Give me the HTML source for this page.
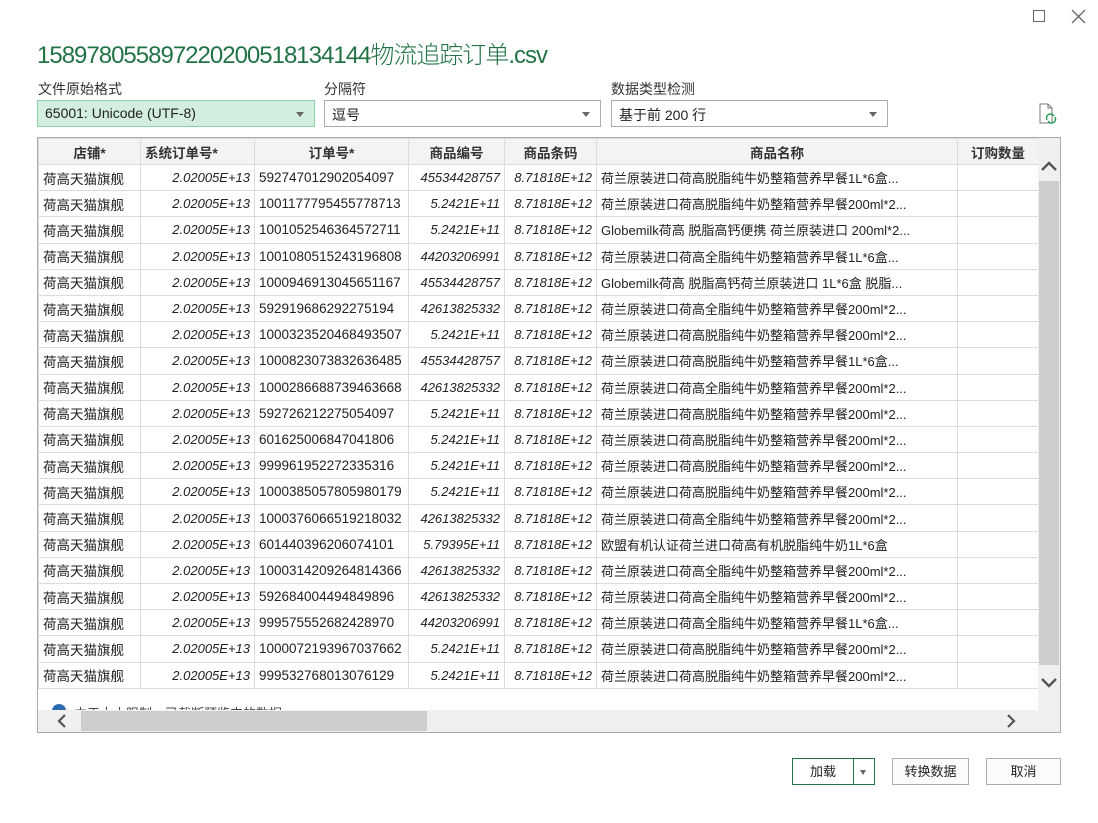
<!DOCTYPE html>
<html><head><meta charset="utf-8"><style>
*{box-sizing:border-box;margin:0;padding:0}
body{width:1098px;height:823px;background:#fff;position:relative;overflow:hidden;font-family:"Liberation Sans","Noto Sans CJK SC",sans-serif;color:#222}
.abs{position:absolute}
.title{left:37px;top:35px;font-size:24px;color:#217346;letter-spacing:-1px;font-weight:300;white-space:nowrap}
.lbl{font-size:14px;color:#333;top:79px}
.sel{top:100px;height:27px;border:1px solid #ababab;font-size:14px;padding:4px 7px;background:#fff}
.sel:after{content:"";position:absolute;right:10px;top:11px;border-left:4px solid transparent;border-right:4px solid transparent;border-top:5px solid #666}
table{border-collapse:collapse;table-layout:fixed;font-size:13.5px}
td,th{border:1px solid #dcdcdc;height:26.2px;white-space:nowrap;overflow:hidden;padding:0 4px}
th{background:#f3f3f3;font-weight:bold;height:26px;color:#333}
td.n{text-align:right;font-style:italic;font-size:13px}
td.m{font-size:13px}
.btn{top:758px;height:27px;border:1px solid #adadad;background:#fbfbfb;font-size:13px;text-align:center;line-height:25px}
</style></head><body>
<div class="abs" style="left:1033px;top:10px;width:12px;height:12px;border:1.5px solid #666"></div>
<svg class="abs" style="left:1071px;top:9px" width="15" height="15"><path d="M1 1L14 14M14 1L1 14" stroke="#666" stroke-width="1.3"/></svg>
<div class="abs title">158978055897220200518134144物流追踪订单.csv</div>
<div class="abs lbl" style="left:38px">文件原始格式</div>
<div class="abs lbl" style="left:324px">分隔符</div>
<div class="abs lbl" style="left:611px">数据类型检测</div>
<div class="abs sel" style="left:37px;width:278px;background:#d3ede0;border-color:#8fcfab">65001: Unicode (UTF-8)</div>
<div class="abs sel" style="left:324px;width:277px">逗号</div>
<div class="abs sel" style="left:611px;width:277px">基于前 200 行</div>
<svg class="abs" style="left:1038px;top:103px" width="20" height="22"><path d="M2 1H10L14 5V20H2Z" fill="none" stroke="#777"/><path d="M10 1V5H14" fill="none" stroke="#777"/><path d="M9 17a4 4 0 0 1 7-4M17 14a4 4 0 0 1-7 4" fill="none" stroke="#2a9d5a" stroke-width="1.5"/></svg>
<div class="abs" style="left:37px;top:137px;width:1024px;height:596px;border:1px solid #ababab;overflow:hidden">
<table class="abs" style="left:0;top:0;width:1000px">
<colgroup><col style="width:102px"><col style="width:114px"><col style="width:154px"><col style="width:96px"><col style="width:92px"><col style="width:361px"><col style="width:81px"></colgroup>
<tr><th>店铺*</th><th style="text-align:left">系统订单号*</th><th>订单号*</th><th>商品编号</th><th>商品条码</th><th>商品名称</th><th>订购数量</th></tr>
<tr><td>荷高天猫旗舰</td><td class="n">2.02005E+13</td><td>592747012902054097</td><td class="n">45534428757</td><td class="n">8.71818E+12</td><td class="m">荷兰原装进口荷高脱脂纯牛奶整箱营养早餐1L*6盒...</td><td></td></tr>
<tr><td>荷高天猫旗舰</td><td class="n">2.02005E+13</td><td>1001177795455778713</td><td class="n">5.2421E+11</td><td class="n">8.71818E+12</td><td class="m">荷兰原装进口荷高脱脂纯牛奶整箱营养早餐200ml*2...</td><td></td></tr>
<tr><td>荷高天猫旗舰</td><td class="n">2.02005E+13</td><td>1001052546364572711</td><td class="n">5.2421E+11</td><td class="n">8.71818E+12</td><td class="m">Globemilk荷高 脱脂高钙便携 荷兰原装进口 200ml*2...</td><td></td></tr>
<tr><td>荷高天猫旗舰</td><td class="n">2.02005E+13</td><td>1001080515243196808</td><td class="n">44203206991</td><td class="n">8.71818E+12</td><td class="m">荷兰原装进口荷高全脂纯牛奶整箱营养早餐1L*6盒...</td><td></td></tr>
<tr><td>荷高天猫旗舰</td><td class="n">2.02005E+13</td><td>1000946913045651167</td><td class="n">45534428757</td><td class="n">8.71818E+12</td><td class="m">Globemilk荷高 脱脂高钙荷兰原装进口 1L*6盒 脱脂...</td><td></td></tr>
<tr><td>荷高天猫旗舰</td><td class="n">2.02005E+13</td><td>592919686292275194</td><td class="n">42613825332</td><td class="n">8.71818E+12</td><td class="m">荷兰原装进口荷高全脂纯牛奶整箱营养早餐200ml*2...</td><td></td></tr>
<tr><td>荷高天猫旗舰</td><td class="n">2.02005E+13</td><td>1000323520468493507</td><td class="n">5.2421E+11</td><td class="n">8.71818E+12</td><td class="m">荷兰原装进口荷高脱脂纯牛奶整箱营养早餐200ml*2...</td><td></td></tr>
<tr><td>荷高天猫旗舰</td><td class="n">2.02005E+13</td><td>1000823073832636485</td><td class="n">45534428757</td><td class="n">8.71818E+12</td><td class="m">荷兰原装进口荷高脱脂纯牛奶整箱营养早餐1L*6盒...</td><td></td></tr>
<tr><td>荷高天猫旗舰</td><td class="n">2.02005E+13</td><td>1000286688739463668</td><td class="n">42613825332</td><td class="n">8.71818E+12</td><td class="m">荷兰原装进口荷高全脂纯牛奶整箱营养早餐200ml*2...</td><td></td></tr>
<tr><td>荷高天猫旗舰</td><td class="n">2.02005E+13</td><td>592726212275054097</td><td class="n">5.2421E+11</td><td class="n">8.71818E+12</td><td class="m">荷兰原装进口荷高脱脂纯牛奶整箱营养早餐200ml*2...</td><td></td></tr>
<tr><td>荷高天猫旗舰</td><td class="n">2.02005E+13</td><td>601625006847041806</td><td class="n">5.2421E+11</td><td class="n">8.71818E+12</td><td class="m">荷兰原装进口荷高脱脂纯牛奶整箱营养早餐200ml*2...</td><td></td></tr>
<tr><td>荷高天猫旗舰</td><td class="n">2.02005E+13</td><td>999961952272335316</td><td class="n">5.2421E+11</td><td class="n">8.71818E+12</td><td class="m">荷兰原装进口荷高脱脂纯牛奶整箱营养早餐200ml*2...</td><td></td></tr>
<tr><td>荷高天猫旗舰</td><td class="n">2.02005E+13</td><td>1000385057805980179</td><td class="n">5.2421E+11</td><td class="n">8.71818E+12</td><td class="m">荷兰原装进口荷高脱脂纯牛奶整箱营养早餐200ml*2...</td><td></td></tr>
<tr><td>荷高天猫旗舰</td><td class="n">2.02005E+13</td><td>1000376066519218032</td><td class="n">42613825332</td><td class="n">8.71818E+12</td><td class="m">荷兰原装进口荷高全脂纯牛奶整箱营养早餐200ml*2...</td><td></td></tr>
<tr><td>荷高天猫旗舰</td><td class="n">2.02005E+13</td><td>601440396206074101</td><td class="n">5.79395E+11</td><td class="n">8.71818E+12</td><td class="m">欧盟有机认证荷兰进口荷高有机脱脂纯牛奶1L*6盒</td><td></td></tr>
<tr><td>荷高天猫旗舰</td><td class="n">2.02005E+13</td><td>1000314209264814366</td><td class="n">42613825332</td><td class="n">8.71818E+12</td><td class="m">荷兰原装进口荷高全脂纯牛奶整箱营养早餐200ml*2...</td><td></td></tr>
<tr><td>荷高天猫旗舰</td><td class="n">2.02005E+13</td><td>592684004494849896</td><td class="n">42613825332</td><td class="n">8.71818E+12</td><td class="m">荷兰原装进口荷高全脂纯牛奶整箱营养早餐200ml*2...</td><td></td></tr>
<tr><td>荷高天猫旗舰</td><td class="n">2.02005E+13</td><td>999575552682428970</td><td class="n">44203206991</td><td class="n">8.71818E+12</td><td class="m">荷兰原装进口荷高全脂纯牛奶整箱营养早餐1L*6盒...</td><td></td></tr>
<tr><td>荷高天猫旗舰</td><td class="n">2.02005E+13</td><td>1000072193967037662</td><td class="n">5.2421E+11</td><td class="n">8.71818E+12</td><td class="m">荷兰原装进口荷高脱脂纯牛奶整箱营养早餐200ml*2...</td><td></td></tr>
<tr><td>荷高天猫旗舰</td><td class="n">2.02005E+13</td><td>999532768013076129</td><td class="n">5.2421E+11</td><td class="n">8.71818E+12</td><td class="m">荷兰原装进口荷高脱脂纯牛奶整箱营养早餐200ml*2...</td><td></td></tr>
</table>
<div class="abs" style="left:14px;top:566px;width:14px;height:14px;border-radius:50%;background:#2b6cb0"></div>
<div class="abs" style="left:36px;top:565px;font-size:13px;color:#444">由于大小限制，已截断预览中的数据。</div>
<div class="abs" style="left:0;top:572px;width:1000px;height:22px;background:#f0f0f0"></div>
<div class="abs" style="left:43px;top:573px;width:346px;height:20px;background:#cdcdcd"></div>
<svg class="abs" style="left:18px;top:576px" width="12" height="14"><path d="M9 1L3 7L9 13" fill="none" stroke="#555" stroke-width="2.2"/></svg>
<svg class="abs" style="left:967px;top:576px" width="12" height="14"><path d="M3 1L9 7L3 13" fill="none" stroke="#555" stroke-width="2.2"/></svg>
<div class="abs" style="left:1000px;top:0;width:22px;height:594px;background:#f0f0f0"></div>
<div class="abs" style="left:1001px;top:43px;width:20px;height:484px;background:#cdcdcd"></div>
<svg class="abs" style="left:1003px;top:22px" width="16" height="12"><path d="M1 10L8 3L15 10" fill="none" stroke="#555" stroke-width="2.4"/></svg>
<svg class="abs" style="left:1003px;top:539px" width="16" height="12"><path d="M1 2L8 9L15 2" fill="none" stroke="#555" stroke-width="2.4"/></svg>
</div>
<div class="abs btn" style="left:792px;width:83px;border-color:#217346;background:#fff;text-align:left;padding-left:17px">加载</div>
<div class="abs" style="left:853px;top:759px;width:1px;height:25px;background:#217346"></div>
<div class="abs" style="left:860px;top:770px;border-left:3.5px solid transparent;border-right:3.5px solid transparent;border-top:5px solid #666"></div>
<div class="abs btn" style="left:892px;width:77px">转换数据</div>
<div class="abs btn" style="left:986px;width:75px">取消</div>
</body></html>
